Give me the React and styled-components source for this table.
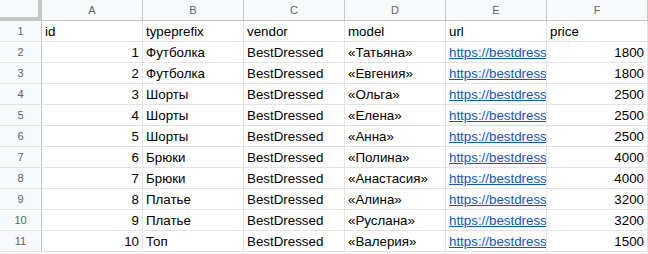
import React from 'react';
import styled, { createGlobalStyle } from 'styled-components';

const GlobalStyle = createGlobalStyle`
  html, body {
    margin: 0;
    background: #ffffff;
  }
  body {
    font-family: "Liberation Sans", Arial, sans-serif;
    overflow: hidden;
  }
`;

const Sheet = styled.div`
  display: grid;
  grid-template-columns: 42px repeat(6, 101px);
  grid-auto-rows: 21px;
  width: 648px;
  overflow: hidden;
`;

const Corner = styled.div`
  box-sizing: border-box;
  background: #f8f9fa;
  border-right: 4px solid #c4c7c5;
  border-bottom: 4px solid #c4c7c5;
`;

const ColHead = styled.div`
  box-sizing: border-box;
  display: flex;
  align-items: center;
  justify-content: center;
  background: #f8f9fa;
  border-right: 1px solid #c4c7c5;
  border-bottom: 1px solid #c4c7c5;
  color: #5f6368;
  font-size: 11px;
`;

const RowHead = styled.div`
  box-sizing: border-box;
  display: flex;
  align-items: center;
  justify-content: center;
  background: #f8f9fa;
  border-right: 1px solid #c4c7c5;
  border-bottom: 1px solid #e1e3e1;
  color: #5f6368;
  font-size: 11px;
`;

const Cell = styled.div`
  box-sizing: border-box;
  display: flex;
  align-items: center;
  justify-content: ${({ $num }) => ($num ? 'flex-end' : 'flex-start')};
  padding: 1px 3px 0;
  border-right: 1px solid #e2e3e3;
  border-bottom: 1px solid #e2e3e3;
  color: ${({ $link }) => ($link ? '#1155cc' : '#000000')};
  text-decoration: ${({ $link }) => ($link ? 'underline' : 'none')};
  font-size: 13.33px;
  white-space: nowrap;
  overflow: hidden;
`;

const columns = ['A', 'B', 'C', 'D', 'E', 'F'];

// url column is narrow, only the visible part of the link is shown
const URL_TEXT = 'https://bestdress';

const rows = [
  [1, 'Футболка', '«Татьяна»', 1800],
  [2, 'Футболка', '«Евгения»', 1800],
  [3, 'Шорты', '«Ольга»', 2500],
  [4, 'Шорты', '«Елена»', 2500],
  [5, 'Шорты', '«Анна»', 2500],
  [6, 'Брюки', '«Полина»', 4000],
  [7, 'Брюки', '«Анастасия»', 4000],
  [8, 'Платье', '«Алина»', 3200],
  [9, 'Платье', '«Руслана»', 3200],
  [10, 'Топ', '«Валерия»', 1500],
];

const App = () => (
  <>
    <GlobalStyle />
    <Sheet>
      <Corner />
      {columns.map((c) => (
        <ColHead key={c}>{c}</ColHead>
      ))}

      <RowHead>1</RowHead>
      <Cell>id</Cell>
      <Cell>typeprefix</Cell>
      <Cell>vendor</Cell>
      <Cell>model</Cell>
      <Cell>url</Cell>
      <Cell>price</Cell>

      {rows.map(([id, type, model, price], i) => (
        <React.Fragment key={id}>
          <RowHead>{i + 2}</RowHead>
          <Cell $num>{id}</Cell>
          <Cell>{type}</Cell>
          <Cell>BestDressed</Cell>
          <Cell>{model}</Cell>
          <Cell $link>{URL_TEXT}</Cell>
          <Cell $num>{price}</Cell>
        </React.Fragment>
      ))}
    </Sheet>
  </>
);

export default App;
